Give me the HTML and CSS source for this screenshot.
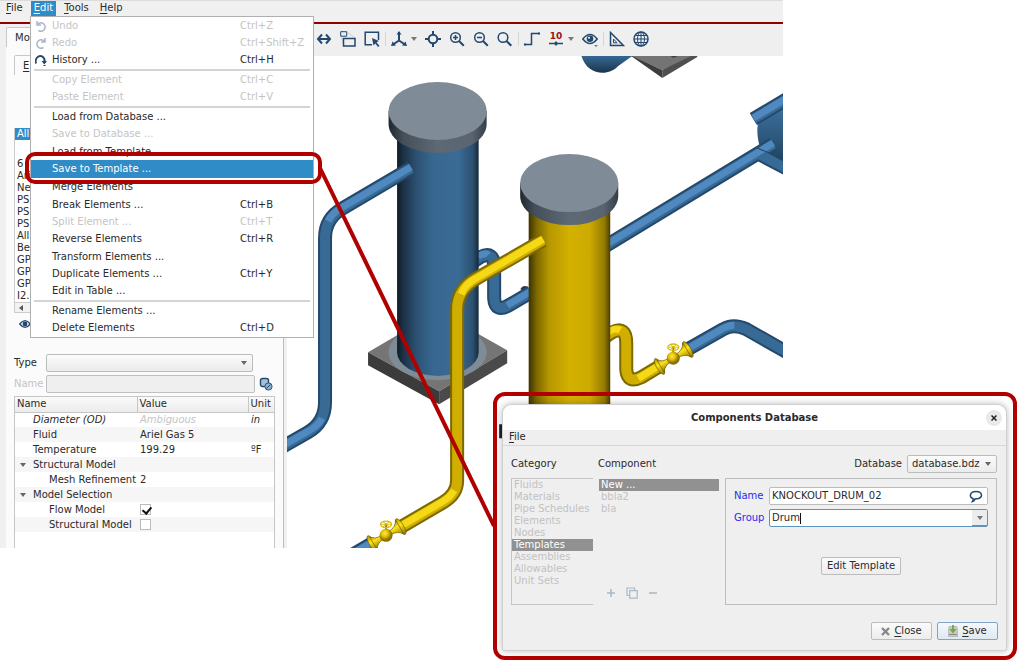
FILE: index.html
```html
<!DOCTYPE html>
<html lang="en">
<head>
<meta charset="utf-8">
<title>Components Database</title>
<link rel="stylesheet" href="styles.css">
</head>
<body>
<div class="app">
  <nav class="menubar">
    <button><u>F</u>ile</button>
    <button class="open"><u>E</u>dit</button>
    <button><u>T</u>ools</button>
    <button><u>H</u>elp</button>
  </nav>
  <div class="workspace">
    <aside class="side">
      <div class="tab">Mo</div>
      <div class="page">
        <div class="tab inner"><u>E</u></div>
        <ul class="elements">
          <li class="sel">All</li>
          <li class="blank"></li>
          <li>6 in</li><li>Ari</li><li>Ne</li><li>PSI</li><li>PSI</li><li>PSI</li>
          <li>All</li><li>Be</li><li>GP</li><li>GP</li><li>GP</li><li>I2.0</li>
        </ul>
        <div class="hscroll"><svg width="4" height="6" viewBox="0 0 4 6"><path d="M4 0v6L0 3z" fill="#555"/></svg></div>
        <svg class="show" width="12" height="10" viewBox="0 0 16 12"><path d="M1 6Q8-3 15 6 8 15 1 6z" fill="none" stroke="#23486f" stroke-width="1.8"/><circle cx="8" cy="6" r="3.2" fill="#23486f"/></svg>
        <form class="props">
          <label for="type">Type</label>
          <select id="type" class="combo"><option></option></select>
          <span></span>
          <label for="ename" class="off">Name</label>
          <input id="ename" disabled>
          <svg width="14" height="14" viewBox="0 0 14 14"><rect x="1.5" y="1.5" width="8" height="8" rx="2" fill="#a9bfd3" stroke="#23486f" stroke-width="1.4"/><circle cx="9.5" cy="9.5" r="3.6" fill="#8fb0cc" stroke="#2a5480"/><path d="M7.5 11.5l4-4" stroke="#23486f"/></svg>
        </form>
        <div class="tablebox">
          <table>
            <colgroup><col class="c1"><col class="c2"><col></colgroup>
            <thead><tr><th>Name</th><th>Value</th><th>Unit</th></tr></thead>
            <tbody>
              <tr><td class="l1"><i>Diameter (OD)</i></td><td class="off"><i>Ambiguous</i></td><td><i>in</i></td></tr>
              <tr><td class="l1">Fluid</td><td>Ariel Gas 5</td><td></td></tr>
              <tr><td class="l1">Temperature</td><td>199.29</td><td>ºF</td></tr>
              <tr><td class="l1 parent">Structural Model</td><td></td><td></td></tr>
              <tr><td class="l2">Mesh Refinement</td><td>2</td><td></td></tr>
              <tr><td class="l1 parent">Model Selection</td><td></td><td></td></tr>
              <tr><td class="l2"><label for="flow">Flow Model</label></td><td><input type="checkbox" id="flow" checked></td><td></td></tr>
              <tr><td class="l2"><label for="struct">Structural Model</label></td><td><input type="checkbox" id="struct"></td><td></td></tr>
            </tbody>
          </table>
        </div>
      </div>
    </aside>
    <main class="view">
      <div class="toolbar">
        <button aria-label="Fit width"><svg viewBox="0 0 16 16"><path d="M2 8h12M6 3.5L2 8l4 4.500M10 3.500L14 8l-4 4.500" class="k2"/></svg></button>
        <button aria-label="Zoom to selection"><svg viewBox="0 0 16 16"><path d="M.7.700h6v4.500h-6z" class="k1"/><path d="M7 1l8 6M1 6l3 8" stroke="#b7c0ca" stroke-width=".7" fill="none"/><path d="M3.500 7.500h11.500v7.500H3.500z" class="k15"/></svg></button>
        <button aria-label="Box select"><svg viewBox="0 0 16 16"><path d="M14.500 9V1.200H1.200v12.500H8" class="k15"/><path d="M8 7l7 3-2.500 1.200L15.500 15l-1.500 1-2.600-3.500L9.500 14.500z" class="f"/></svg></button>
        <i class="sep"></i>
        <span class="split"><button aria-label="Axes"><svg viewBox="0 0 16 16"><path d="M8 1v8.500L2 13.500M8 9.500l6 4" class="k2"/><path d="M5.500 3.500L8 0l2.500 3.500zM0 15l1.500-4.500L5 14.500zM16 15l-1.500-4.500L11 14.500z" class="f"/></svg></button><i class="caret"></i></span>
        <button aria-label="Centre"><svg viewBox="0 0 16 16"><circle cx="8" cy="8" r="4.300" class="k2"/><path d="M8 0v4M8 12v4M0 8h4M12 8h4" class="k2"/></svg></button>
        <button aria-label="Zoom in"><svg viewBox="0 0 16 16"><circle cx="6.500" cy="6.500" r="4.800" class="k15"/><path d="M10 10l4.800 4.800" class="k2"/><path d="M4 6.500h5M6.500 4v5" class="k15"/></svg></button>
        <button aria-label="Zoom out"><svg viewBox="0 0 16 16"><circle cx="6.500" cy="6.500" r="4.800" class="k15"/><path d="M10 10l4.800 4.800" class="k2"/><path d="M4 6.500h5" class="k15"/></svg></button>
        <button aria-label="Zoom"><svg viewBox="0 0 16 16"><circle cx="6" cy="6.500" r="4.800" class="k15"/><path d="M9.500 10l4.800 4.800" class="k2"/></svg></button>
        <i class="sep"></i>
        <button aria-label="Step"><svg viewBox="0 0 16 16"><path d="M1 13.500h6.500v-11H15" class="k15"/><path d="M0 12.500h2v2H0zM14 1.500h2v2h-2z" class="f"/></svg></button>
        <span class="split"><button class="ten" aria-label="Increment">10<svg viewBox="0 0 16 5"><path d="M1 2.500h14" class="k15"/><path d="M6 2.500L8 0l2 2.500L8 5z" class="f"/></svg></button><i class="caret"></i></span>
        <button aria-label="Visibility"><svg viewBox="0 0 16 16"><path d="M.8 8Q8-1 15.200 8 8 17 .8 8z" class="k15"/><circle cx="8" cy="7.800" r="3.300" class="f"/><circle cx="7" cy="6.800" r="1" fill="#fff"/><path d="M12 14h4l-2 2z" fill="#777"/></svg></button>
        <i class="sep"></i>
        <button aria-label="Measure"><svg viewBox="0 0 16 16"><path d="M1.500 1.500v13h13z" class="k15"/><path d="M4.500 8v3.800H8z" class="k1"/><path d="M2 4h2M2 7h1.500M2 13h10" stroke="#d49a50" stroke-width=".8" stroke-dasharray="1 1"/></svg></button>
        <button aria-label="Globe"><svg viewBox="0 0 16 16"><circle cx="8" cy="8" r="7" class="k15"/><ellipse cx="8" cy="8" rx="3.500" ry="7" class="k1"/><path d="M8 1v14M1 8h14M2 4.500h12M2 11.500h12" class="k1"/></svg></button>
      </div>
      <svg class="scene" viewBox="287 56 496 492" preserveAspectRatio="xMinYMin slice">
        <defs>
          <linearGradient id="blue"><stop offset="0" stop-color="#101c28"/><stop offset=".08" stop-color="#1c3247"/><stop offset=".25" stop-color="#2d5375"/><stop offset=".45" stop-color="#386891"/><stop offset=".75" stop-color="#3a6b96"/><stop offset=".93" stop-color="#2b506f"/><stop offset="1" stop-color="#16293b"/></linearGradient>
          <linearGradient id="gold"><stop offset="0" stop-color="#3d3300"/><stop offset=".1" stop-color="#7d6900"/><stop offset=".25" stop-color="#b59700"/><stop offset=".5" stop-color="#d4b000"/><stop offset=".75" stop-color="#cdaa00"/><stop offset=".93" stop-color="#927a00"/><stop offset="1" stop-color="#4a3e00"/></linearGradient>
          <linearGradient id="rim"><stop offset="0" stop-color="#1f272e"/><stop offset=".15" stop-color="#454f59"/><stop offset=".5" stop-color="#5d6975"/><stop offset=".85" stop-color="#59646f"/><stop offset="1" stop-color="#353e47"/></linearGradient>
          <linearGradient id="cone" x2="0" y2="1"><stop offset="0" stop-color="#b39600"/><stop offset=".4" stop-color="#ffe21a"/><stop offset="1" stop-color="#8a7300"/></linearGradient>
          <radialGradient id="ball" cx=".4" cy=".35"><stop offset="0" stop-color="#ffe94a"/><stop offset=".5" stop-color="#e8c400"/><stop offset="1" stop-color="#8a7300"/></radialGradient>
          <linearGradient id="vessel" x2="0" y2="1"><stop offset="0" stop-color="#3f75a5"/><stop offset=".5" stop-color="#2e587d"/><stop offset="1" stop-color="#1b354c"/></linearGradient>
          <g id="cap"><path d="M-49 0v13a49 29 0 0 0 98 0V0z" fill="url(#rim)"/><ellipse rx="49" ry="29" fill="#7f8b96"/></g>
          <g id="valve">
            <g transform="rotate(-31)">
              <g fill="url(#cone)" stroke="#6b5900" stroke-width=".6">
                <ellipse cx="-16" rx="3" ry="9"/><path d="M-15-7Q-11-2-5-2V2Q-11 2-15 7z"/>
                <ellipse cx="17" rx="3" ry="9"/><path d="M16-8Q12-2 5-2V2Q12 2 16 8z"/>
              </g>
            </g>
            <path d="M-1-12h2v7h-2z" fill="#a08600"/>
            <circle r="6.500" fill="url(#ball)"/>
            <g fill="none" stroke="#d9b800" stroke-width="1.300"><ellipse cy="-11" rx="5.500" ry="3.200"/><path d="M-5-11H5M-3-8.500l6-5M-3-13.500l6 5" stroke-width=".9"/></g>
          </g>
        </defs>

        <g>
          <path d="M580 50C583 75 607 78 618 66L632 56V50z" fill="url(#vessel)"/>
          <path d="M632 56h64l-34 14z" fill="#747474"/><path d="M628 54l34 16v8z" fill="#3d3d3d"/><path d="M662 70l35-17v4l-35 21z" fill="#4f4f4f"/><path d="M669 55l4 3 7-3z" fill="#444"/>
        </g>

        <path d="M520 289q3-5 8-2v5z" fill="#25384a"/>
        <g class="pipe blue">
          <path d="M474 261l6-4q14-7 14 10v31q1 15 15 7l22-13"/>
          <path d="M474 261l6-4q14-7 14 10v31q1 15 15 7l22-13"/>
        </g>
        <g class="shine blue"><path d="M478 256q7-4 10-1M507 305l24-14"/></g>

        <path d="M368 352l70-41 69 39-68 41z" fill="#757575"/>
        <path d="M368 352v13l71 39v-13z" fill="#3b3b3b"/>
        <path d="M439 391v13l68-41v-13z" fill="#4a4a4a"/>
        <ellipse cx="437.500" cy="352" rx="49" ry="28" fill="#7f8b96"/>
        <path d="M397 118v234a40.500 23.500 0 0 0 81.500 0V118z" fill="url(#blue)"/>
        <use href="#cap" x="437.500" y="111"/>

        <g class="pipe blue">
          <path d="M411 168l-68 40q-18 10-18 30v164q0 20-17 30l-30 17"/>
          <path d="M411 168l-68 40q-18 10-18 30v164q0 20-17 30l-30 17"/>
        </g>
        <g class="shine blue"><path d="M411 167l-70 41q-9 5-13 13M322 418q-4 8-14 13l-30 17"/></g>

        <path d="M757 130c0-15 10-24 30-30v75c-20-6-30-25-30-45z" fill="url(#vessel)"/>
        <g class="pipe blue">
          <path d="M753 119l37-22M600 249l173-105M757 153l34 18"/>
          <path d="M753 119l37-22M600 249l173-105M757 153l34 18"/>
        </g>
        <g class="shine blue"><path d="M753 118l37-22M600 248l173-105"/></g>
        <path d="M757 148l12 5 20 11" fill="none" stroke="#234668"/>

        <g class="pipe blue">
          <path d="M686 350l37-21q10-6 23 0l44 25"/>
          <path d="M686 350l37-21q10-6 23 0l44 25"/>
        </g>
        <g class="shine blue"><path d="M690 347l33-19q6-3 11-3"/></g>
        <g class="pipe gold">
          <path d="M600 340l12-8q14-7 14 11v26q1 15 15 8l20-12"/>
          <path d="M600 340l12-8q14-7 14 11v26q1 15 15 8l20-12"/>
        </g>
        <g class="shine gold"><path d="M608 332q7-5 12-2M638 378l23-14"/></g>
        <use href="#valve" x="673" y="358"/>

        <path d="M528.500 190v370H610V190z" fill="url(#gold)"/>
        <use href="#cap" x="569" y="183"/>

        <g class="pipe blue"><path d="M372 543l-24 14"/><path d="M372 543l-24 14"/></g>
        <g class="shine blue"><path d="M372 542l-24 14"/></g>
        <g class="pipe gold">
          <path d="M543 240l-66 38q-20 11-20 31v171q0 14-14 22l-41 24"/>
          <path d="M543 240l-66 38q-20 11-20 31v171q0 14-14 22l-41 24"/>
        </g>
        <g class="shine gold"><path d="M543 239l-67 39q-11 6-15 16M454 490q-4 7-11 11l-41 24"/></g>
        <use href="#valve" x="386" y="535"/>
        <path d="M499 424h6v14h-6z" fill="#1d222c"/>
      </svg>
    </main>
  </div>
</div>

<ul class="menu">
  <li class="off"><svg viewBox="0 0 12 12"><path d="M2 1v4h4M2.500 4.500a4.200 4.200 0 1 1 1 6" class="pale"/></svg>Undo<kbd>Ctrl+Z</kbd></li>
  <li class="off"><svg viewBox="0 0 12 12"><path d="M10 1v4H6M9.500 4.500a4.200 4.200 0 1 0-1 6" class="pale"/></svg>Redo<kbd>Ctrl+Shift+Z</kbd></li>
  <li><svg viewBox="0 0 12 12"><path d="M1 9.500a4.500 5.500 0 0 1 8.500-4V9" class="k2"/><path d="M6.500 7h5.500L9.300 10.500zM8.500 11h2v1h-2z" class="f"/></svg>History ...<kbd>Ctrl+H</kbd></li>
  <li class="rule"></li>
  <li class="off">Copy Element<kbd>Ctrl+C</kbd></li>
  <li class="off">Paste Element<kbd>Ctrl+V</kbd></li>
  <li class="rule"></li>
  <li>Load from Database ...</li>
  <li class="off">Save to Database ...</li>
  <li>Load from Template</li>
  <li class="sel">Save to Template ...</li>
  <li>Merge Elements</li>
  <li>Break Elements ...<kbd>Ctrl+B</kbd></li>
  <li class="off">Split Element ...<kbd>Ctrl+T</kbd></li>
  <li>Reverse Elements<kbd>Ctrl+R</kbd></li>
  <li>Transform Elements ...</li>
  <li>Duplicate Elements ...<kbd>Ctrl+Y</kbd></li>
  <li>Edit in Table ...</li>
  <li class="rule"></li>
  <li>Rename Elements ...</li>
  <li>Delete Elements<kbd>Ctrl+D</kbd></li>
</ul>

<section class="dialog">
  <header><h1>Components Database</h1><button class="x" aria-label="Close window"><svg width="6" height="6" viewBox="0 0 6 6"><path d="M.5.500l5 5M5.500.500l-5 5" stroke="#222" stroke-width="1.500"/></svg></button></header>
  <nav class="dmenu"><button><u>F</u>ile</button></nav>
  <div class="dbody">
    <div class="col">
      <h2>Category</h2>
      <ul class="list framed">
        <li>Fluids</li><li>Materials</li><li>Pipe Schedules</li><li>Elements</li><li>Nodes</li><li class="sel">Templates</li><li>Assemblies</li><li>Allowables</li><li>Unit Sets</li>
      </ul>
    </div>
    <div class="col comp">
      <h2>Component</h2>
      <ul class="list"><li class="sel">New ...</li><li>bbla2</li><li>bla</li></ul>
      <div class="edit">
        <button aria-label="Add"><svg viewBox="0 0 12 12"><path d="M6 2v8M2 6h8" class="pale"/></svg></button>
        <button aria-label="Duplicate"><svg viewBox="0 0 12 12"><path d="M3 8.500H1V1h7.500v2M3.700 3.700h7.500v7.500H3.700z" class="pale thin"/></svg></button>
        <button aria-label="Remove"><svg viewBox="0 0 12 12"><path d="M2 6h8" class="pale"/></svg></button>
      </div>
    </div>
    <div class="col detail">
      <div class="db"><label for="db">Database</label><select id="db" class="combo"><option>database.bdz</option></select></div>
      <form class="frame">
        <label for="name">Name</label>
        <div class="field"><input id="name" value="KNOCKOUT_DRUM_02"><svg width="14" height="13" viewBox="0 0 14 13"><path d="M4 8.500C-.5 7 1 1.500 7 1.500s7.500 5.500 2.500 7L6 9q-.5 2-2.500 2.500Q4.500 10 4 8.500z" class="k15"/></svg></div>
        <label for="group">Group</label>
        <div class="field focus"><input id="group" value="Drum"><b class="cursor"></b><button type="button" aria-label="Groups"><i class="caret"></i></button></div>
        <button type="button" class="btn tpl">Edit Template</button>
      </form>
    </div>
  </div>
  <footer>
    <button class="btn"><svg width="9" height="9" viewBox="0 0 9 9"><path d="M1 1l7 7M8 1L1 8" stroke="#888" stroke-width="2.400"/></svg><span><u>C</u>lose</span></button>
    <button class="btn main"><svg width="10" height="12" viewBox="0 0 10 12"><path d="M1 1.500h8l1 7v3H0v-3z" fill="#c9c9c9" stroke="#aaa" stroke-width=".6"/><path d="M4 0h2v4h2.500L5 8.500 1.500 4H4z" fill="#6fae3c"/><path d="M1 9.500h8" stroke="#8a8a8a"/></svg><span><u>S</u>ave</span></button>
  </footer>
</section>

<svg class="callout" width="1024" height="667" viewBox="0 0 1024 667">
  <rect x="27" y="154" width="293" height="28" rx="8"/>
  <path d="M320 168l174 358"/>
  <rect x="495" y="394" width="520" height="264" rx="10"/>
</svg>
</body>
</html>
```
FILE: styles.css
```css
* { box-sizing: border-box; }
body { margin: 0; min-height: 100vh; background: #fff; color: #2a2a2a; font: 10px/12px "DejaVu Sans", sans-serif; position: relative; }
button, input, select { font: inherit; color: inherit; margin: 0; padding: 0; border: 0; background: none; border-radius: 0; }
ul { list-style: none; margin: 0; padding: 0; }
u { text-underline-offset: 2px; }
.off { color: #c4c4c4; }
.k1, .k15, .k2 { fill: none; stroke: #23486f; stroke-width: 1; }
.k15 { stroke-width: 1.5; }
.k2 { stroke-width: 2; }
.f { fill: #23486f; }
.pale { fill: none; stroke: #aab9c8; stroke-width: 1.6; }
.pale.thin { stroke-width: 1.2; }
.sel { background: #308cc6; color: #fff; }

.app { width: 76.5%; min-height: 82.2vh; display: flex; flex-direction: column; background: #f0f0f0; }
.menubar { display: flex; gap: 5px; height: 24px; padding: 0 3px; border-top: 1px solid #dcdcdc; border-bottom: 2px solid #8e0000; align-items: flex-start; }
.menubar button { padding: 0 3px 2px; height: 15px; line-height: 12px; }
.menubar .open { background: #308cc6; color: #fff; }
.workspace { flex: 1; display: flex; }

.side { width: 287px; padding: 3px 3px 0 6px; display: flex; flex-direction: column; }
.tab { width: 80px; height: 20px; padding: 4px 8px; background: #fbfbfb; border: 1px solid #c8c8c8; border-bottom: 0; border-radius: 2px 0 0 0; }
.tab.inner { margin-top: 8px; }
.page { flex: 1; display: flex; flex-direction: column; background: #fbfbfb; border-right: 1px solid #bdbdbd; padding: 0 8px; }
.elements { margin-top: 53px; background: #fff; border-left: 1px solid #ccc; }
.elements li { height: 12px; padding-left: 2px; }
.elements .blank { height: 18px; }
.hscroll { height: 11px; border: 1px solid #ccc; background: #f2f2f2; padding: 2px 4px; line-height: 0; }
.show { margin: 6px 5px 0; }
.props { display: grid; grid-template-columns: 32px 1fr 14px; row-gap: 3px; align-items: center; margin-top: 25px; }
.props select { margin-right: 8px; }
.props input { height: 18px; margin-right: 6px; border: 1px solid #c0c0c0; border-radius: 2px; background: #efefef; }
.props svg { margin-left: -2px; }
.combo { appearance: none; height: 18px; padding: 0 4px; border: 1px solid #bcbcbc; border-radius: 2px; background: url("data:image/svg+xml,%3Csvg xmlns='http://www.w3.org/2000/svg' width='6' height='4'%3E%3Cpath d='M0 0h6L3 4z' fill='%23666'/%3E%3C/svg%3E") right 5px center no-repeat, linear-gradient(#fbfbfb, #ebebeb); }
.tablebox { flex: 1; margin-top: 3px; border: 1px solid #c6c6c6; border-bottom: 0; background: #fff; }
table { width: 100%; border-collapse: collapse; table-layout: fixed; }
.c1 { width: 122px; }
.c2 { width: 111px; }
th { height: 15px; padding: 0 2px; text-align: left; font-weight: 400; background: linear-gradient(#fafafa, #ececec); border-bottom: 1px solid #c6c6c6; }
th + th { border-left: 1px solid #c6c6c6; }
td { height: 15px; padding: 0 3px; line-height: 12px; white-space: nowrap; }
tbody tr:nth-child(even) { background: #f6f6f6; }
.l1 { padding-left: 18px; }
.l2 { padding-left: 34px; }
.parent::before { content: ""; float: left; margin: 4px 0 0 -13px; border: 3px solid transparent; border-top: 4px solid #666; border-bottom: 0; }
td input { appearance: none; display: block; width: 11px; height: 11px; border: 1px solid #bcbcbc; background: #fff; }
td input:checked::after { content: ""; display: block; width: 4px; height: 7px; margin-left: 3px; border: solid #111; border-width: 0 2px 2px 0; transform: rotate(40deg); }

.view { flex: 1; min-width: 0; display: flex; flex-direction: column; background: #fff; overflow: hidden; }
.toolbar { height: 32px; padding: 0 8px 3px 29px; display: flex; align-items: center; gap: 8px; background: #efefef; }
.toolbar button { width: 16px; height: 16px; line-height: 0; flex: none; }
.split { display: flex; align-items: center; gap: 4px; }
.sep { width: 1px; height: 14px; margin: 0 -3px; background: #d6d6d6; }
.caret { border: 3px solid transparent; border-top: 4px solid #777; border-bottom: 0; }
.toolbar .ten { color: #a01010; font-weight: 700; font-size: 9px; line-height: 9px; text-align: center; }
.ten svg { display: block; }
.scene { flex: 1; width: 100%; height: 0; display: block; }
.pipe, .shine { fill: none; }
.pipe path { stroke-width: 14; }
.pipe path + path { stroke-width: 10; }
.pipe.blue path { stroke: #24496b; }
.pipe.blue path + path { stroke: #386a96; }
.pipe.gold path { stroke: #7c6900; }
.pipe.gold path + path { stroke: #cfae00; }
.shine path { stroke-width: 7; opacity: .8; }
.shine.blue path { stroke: #5591c9; }
.shine.gold path { stroke: #ffe31a; }

.menu { position: absolute; top: 16px; left: 30px; width: 284px; background: #fff; border: 1px solid #b0b0b0; }
.menu li { height: 17px; display: flex; align-items: center; padding-left: 21px; position: relative; }
.menu li:nth-child(3n), .menu .sel { height: 18px; }
.menu .rule { height: 2px; margin: 0 3px; background: #d4d4d4; }
.menu kbd { position: absolute; left: 209px; font: inherit; }
.menu svg { width: 12px; height: 12px; margin: 0 5px 0 -17px; }

.dialog { position: absolute; left: 502px; top: 404px; width: 505px; background: #efefef; border: 1px solid #d0d0d0; border-radius: 9px 9px 2px 2px; box-shadow: 0 0 7px #0004; }
.dialog header { height: 25px; background: #fff; border-radius: 9px 9px 0 0; display: flex; align-items: center; padding-right: 4px; }
h1 { flex: 1; margin: 0 0 0 20px; text-align: center; font-size: 10px; }
.x { width: 16px; height: 16px; border-radius: 50%; background: #e9e9e9; line-height: 0; }
.dmenu { padding: 1px 6px 0; height: 16px; border-bottom: 1px solid #d6d6d6; }
.dbody { display: grid; grid-template-columns: 82px 122px 1fr; gap: 5px; padding: 9px 9px 0 8px; }
.col { display: flex; flex-direction: column; }
h2 { margin: 0 0 5px; height: 18px; line-height: 18px; font-size: 10px; font-weight: 400; }
.list { color: #c2c2c2; border: 1px solid transparent; }
.list li { height: 12px; padding-left: 2px; white-space: nowrap; }
.list .sel { background: #919191; color: #fff; }
.framed { border-color: #c4c4c4; border-right: 0; height: 127px; }
.comp .list { flex: 1; }
.edit { display: flex; gap: 9px; padding: 0 0 6px 7px; }
.edit button { width: 12px; height: 12px; line-height: 0; }
.db { display: flex; justify-content: flex-end; align-items: center; gap: 5px; margin-bottom: 5px; }
.db .combo { width: 90px; }
.frame { height: 127px; border: 1px solid #bdbdbd; padding: 8px; display: grid; grid-template-columns: 30px 1fr; grid-template-rows: 18px 18px 1fr; gap: 4px 5px; align-items: center; }
.frame label { color: #2a2af0; }
.field { height: 18px; display: flex; align-items: center; background: #fff; border: 1px solid #bcbcbc; border-radius: 2px; position: relative; padding-right: 4px; }
.field input { flex: 1; min-width: 0; padding: 0 2px; outline: 0; }
.focus { border-color: #5d93bf; padding: 0; }
.focus button { width: 15px; height: 100%; background: #ececec; border-bottom: 1px solid #5d93bf; display: flex; align-items: center; justify-content: center; }
.cursor { position: absolute; left: 30px; top: 3px; width: 1px; height: 11px; background: #111; }
.btn { height: 18px; padding: 0 5px; border: 1px solid #bcbcbc; border-radius: 2px; background: linear-gradient(#fbfbfb, #ededed); display: flex; align-items: center; justify-content: center; gap: 4px; }
.tpl { grid-column: 1 / -1; justify-self: center; margin-top: 4px; }
.dialog footer { display: flex; justify-content: flex-end; gap: 5px; padding: 17px 8px 10px; }
footer .btn { width: 61px; }
.btn.main { border-color: #7fa6c8; background: linear-gradient(#f4f8fb, #dfe9f0); }

.callout { position: absolute; left: 0; top: 0; pointer-events: none; fill: none; stroke: #b00000; stroke-width: 4; }
```
